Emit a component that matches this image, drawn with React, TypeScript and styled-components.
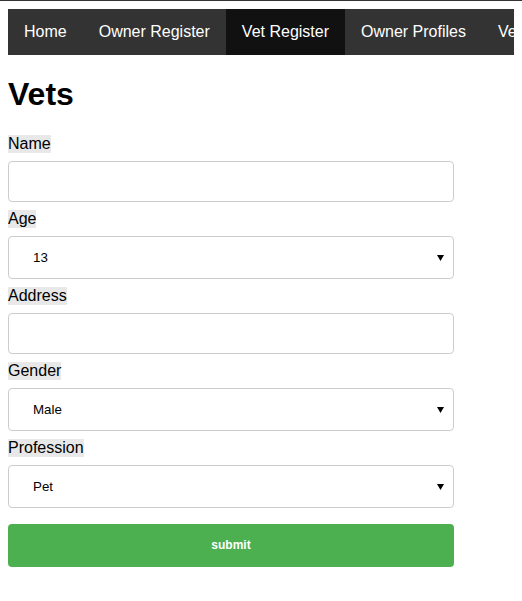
import React from "react";
import styled, { createGlobalStyle } from "styled-components";

const Global = createGlobalStyle`
  html {
    border-top: 1px solid #333;
    overflow-x: hidden;
  }
  body {
    margin: 8px;
    font-family: "Liberation Sans", Arial, sans-serif;
    background: #fff;
    color: #000;
  }
  * { box-sizing: border-box; }
`;

const Nav = styled.ul`
  list-style: none;
  margin: 0 -8px 0 0;
  padding: 0;
  display: flex;
  background: #333;
  overflow: hidden;
  white-space: nowrap;
`;

const NavItem = styled.li<{ $active?: boolean }>`
  flex-shrink: 0;
  padding: 14px 16px;
  font-size: 16px;
  line-height: 18px;
  color: #fff;
  background: ${(p) => (p.$active ? "#111" : "transparent")};
`;

const Title = styled.h1`
  font-size: 32px;
  font-weight: bold;
  margin: 21.44px 0;
  line-height: 37px;
`;

const Form = styled.form`
  width: 446px;
  display: flex;
  flex-direction: column;
  align-items: flex-start;
`;

const Label = styled.label`
  display: block;
  font-size: 16px;
  line-height: 18px;
  background: #e8e8e8;
  margin: 0;
`;

const TextInput = styled.input`
  display: block;
  width: 100%;
  height: 41px;
  margin: 8px 0;
  padding: 12px 20px;
  border: 1px solid #ccc;
  border-radius: 4px;
  font-family: "Liberation Sans", Arial, sans-serif;
  font-size: 13.33px;
  background: #fff;
`;

const SelectWrap = styled.div`
  position: relative;
  width: 100%;
  margin: 8px 0;
`;

const Select = styled.select`
  display: block;
  width: 100%;
  height: 43px;
  padding: 0 20px 0 24px;
  border: 1px solid #ccc;
  border-radius: 4px;
  font-family: "Liberation Sans", Arial, sans-serif;
  font-size: 13.33px;
  color: #000;
  background: #fff;
  appearance: none;
  -webkit-appearance: none;
`;

const Arrow = styled.svg`
  position: absolute;
  right: 10px;
  top: 19px;
  width: 7px;
  height: 6px;
  pointer-events: none;
`;

const Submit = styled.button`
  width: 100%;
  height: 43px;
  margin: 8px 0;
  border: none;
  border-radius: 4px;
  background: #4caf50;
  color: #fff;
  font-family: "Liberation Sans", Arial, sans-serif;
  font-size: 12px;
  font-weight: bold;
  cursor: pointer;
`;

const navItems = ["Home", "Owner Register", "Vet Register", "Owner Profiles", "Vet Profiles"];

function Dropdown({ value, options }: { value: string; options: string[] }) {
  return (
    <SelectWrap>
      <Select defaultValue={value}>
        {options.map((o) => (
          <option key={o} value={o}>
            {o}
          </option>
        ))}
      </Select>
      <Arrow viewBox="0 0 7 6">
        <path d="M0 0 H7 L3.5 6 Z" fill="#000" />
      </Arrow>
    </SelectWrap>
  );
}

export default function App() {
  return (
    <>
      <Global />
      <Nav>
        {navItems.map((n) => (
          <NavItem key={n} $active={n === "Vet Register"}>
            {n}
          </NavItem>
        ))}
      </Nav>
      <Title>Vets</Title>
      <Form onSubmit={(e) => e.preventDefault()}>
        <Label>Name</Label>
        <TextInput type="text" />
        <Label>Age</Label>
        <Dropdown value="13" options={["13", "14", "15"]} />
        <Label>Address</Label>
        <TextInput type="text" />
        <Label>Gender</Label>
        <Dropdown value="Male" options={["Male", "Female"]} />
        <Label>Profession</Label>
        <Dropdown value="Pet" options={["Pet", "Vet"]} />
        <Submit type="submit">submit</Submit>
      </Form>
    </>
  );
}
